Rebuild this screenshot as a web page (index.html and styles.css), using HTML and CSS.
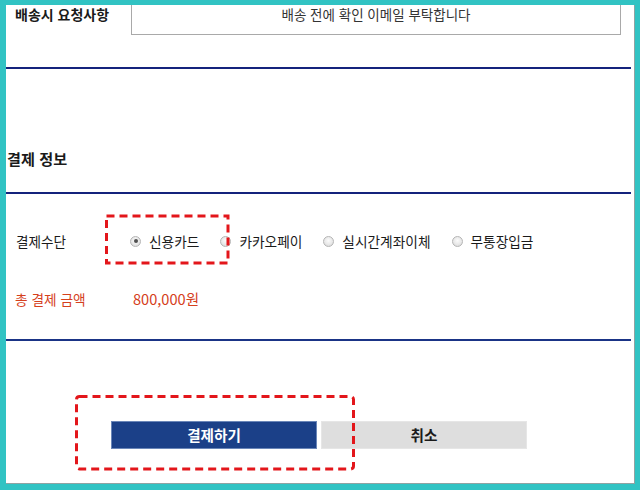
FILE: index.html
```html
<!DOCTYPE html>
<html lang="ko">
<head>
<meta charset="utf-8">
<title>결제 정보</title>
<link rel="stylesheet" href="styles.css">
</head>
<body>
<div class="frame">
  <div class="panel">
    <div class="row-request">
      <div class="req-label">배송시 요청사항</div>
      <div class="req-box">배송 전에 확인 이메일 부탁합니다</div>
    </div>
    <div class="rule rule-1"></div>
    <h2 class="section-title">결제 정보</h2>
    <div class="rule rule-2"></div>
    <div class="row-method">
      <div class="method-label">결제수단</div>
      <div class="options">
        <label class="opt"><input type="radio" name="pay" checked><span>신용카드</span></label>
        <label class="opt"><input type="radio" name="pay"><span>카카오페이</span></label>
        <label class="opt"><input type="radio" name="pay"><span>실시간계좌이체</span></label>
        <label class="opt"><input type="radio" name="pay"><span>무통장입금</span></label>
      </div>
    </div>
    <div class="row-total">
      <div class="total-label">총 결제 금액</div>
      <div class="total-value">800,000원</div>
    </div>
    <div class="rule rule-3"></div>
    <div class="buttons">
      <button class="btn btn-pay">결제하기</button>
      <button class="btn btn-cancel">취소</button>
    </div>

    <svg class="mark mark-1" width="125" height="51" viewBox="0 0 125 51">
      <rect x="1.5" y="2" width="121.5" height="47" fill="none" stroke="#e3161b" stroke-width="3" stroke-dasharray="8 5"/>
    </svg>
    <svg class="mark mark-2" width="281" height="76" viewBox="0 0 281 76">
      <rect x="1.5" y="1.5" width="277" height="72.5" rx="3" fill="none" stroke="#e3161b" stroke-width="3" stroke-dasharray="8 5"/>
    </svg>
  </div>
</div>
</body>
</html>
```

FILE: styles.css
```css
* { box-sizing: border-box; }
html, body { margin: 0; padding: 0; }
body {
  width: 640px;
  height: 490px;
  overflow: hidden;
  font-family: "Noto Sans CJK KR", "Noto Sans", sans-serif;
  color: #1a1a1a;
}
.frame {
  width: 640px;
  height: 490px;
  background: #31c3c3;
  padding: 5px 5px 6px 6px;
}
.panel {
  position: relative;
  width: 100%;
  height: 100%;
  background: #fff;
  border-right: 1px solid #8fa3a3;
  border-bottom: 1px solid #8fa3a3;
  overflow: hidden;
}
.row-request {
  display: flex;
  align-items: center;
  height: 42px;
  margin-top: -12px;
}
.req-label {
  width: 125px;
  padding-left: 9px;
  font-size: 14px;
  font-weight: 700;
  line-height: 20px;
}
.req-box {
  width: 490px;
  height: 42px;
  border: 1px solid #a9a9a9;
  display: flex;
  align-items: center;
  justify-content: center;
  font-size: 13.5px;
  color: #333;
  line-height: 18px;
}
.rule {
  height: 2px;
  background: #14237c;
  margin-right: 3px;
}
.rule-1 { margin-top: 32px; }
.section-title {
  margin: 79px 0 24px 1px;
  font-size: 15.2px;
  font-weight: 700;
  line-height: 20px;
}
.row-method {
  display: flex;
  align-items: center;
  height: 24px;
  margin-top: 35px;
}
.method-label {
  width: 124px;
  padding-left: 10px;
  font-size: 13.6px;
  line-height: 18px;
}
.options {
  display: flex;
  align-items: center;
}
.opt {
  display: flex;
  align-items: center;
  margin-right: 21px;
  font-size: 13.7px;
  line-height: 18px;
}
.opt input {
  appearance: none;
  -webkit-appearance: none;
  margin: 0 8px 0 0;
  width: 11px;
  height: 11px;
  border-radius: 50%;
  border: 1px solid #b5b5b5;
  background: radial-gradient(circle at 50% 40%, #fbfbfb 0%, #e6e6e6 60%, #d2d2d2 100%);
  display: flex;
  align-items: center;
  justify-content: center;
}
.opt input:checked::after {
  content: "";
  width: 4px;
  height: 4px;
  border-radius: 50%;
  background: #505050;
}
.row-total {
  display: flex;
  align-items: center;
  height: 24px;
  margin-top: 34px;
  color: #d5401c;
}
.total-label {
  width: 127px;
  padding-left: 9px;
  font-size: 13.7px;
  line-height: 18px;
}
.total-value {
  font-size: 14.6px;
  line-height: 18px;
}
.rule-3 {
  margin-top: 28px;
  background: #1a3486;
}
.buttons {
  display: flex;
  gap: 4px;
  margin-top: 80px;
  padding-left: 105px;
}
.btn {
  width: 206px;
  height: 28px;
  margin: 0;
  padding: 0;
  font-family: inherit;
  font-size: 14.6px;
  font-weight: 700;
  line-height: 18px;
  cursor: pointer;
}
.btn-pay {
  background: #1b4088;
  color: #fff;
  border: 1px solid #6a86b8;
}
.btn-cancel {
  background: #dedede;
  color: #1a1a1a;
  border: 1px solid #e6e6e6;
}
.mark {
  position: absolute;
  display: block;
}
.mark-1 { left: 99px; top: 209px; }
.mark-2 { left: 69px; top: 390px; }
```
